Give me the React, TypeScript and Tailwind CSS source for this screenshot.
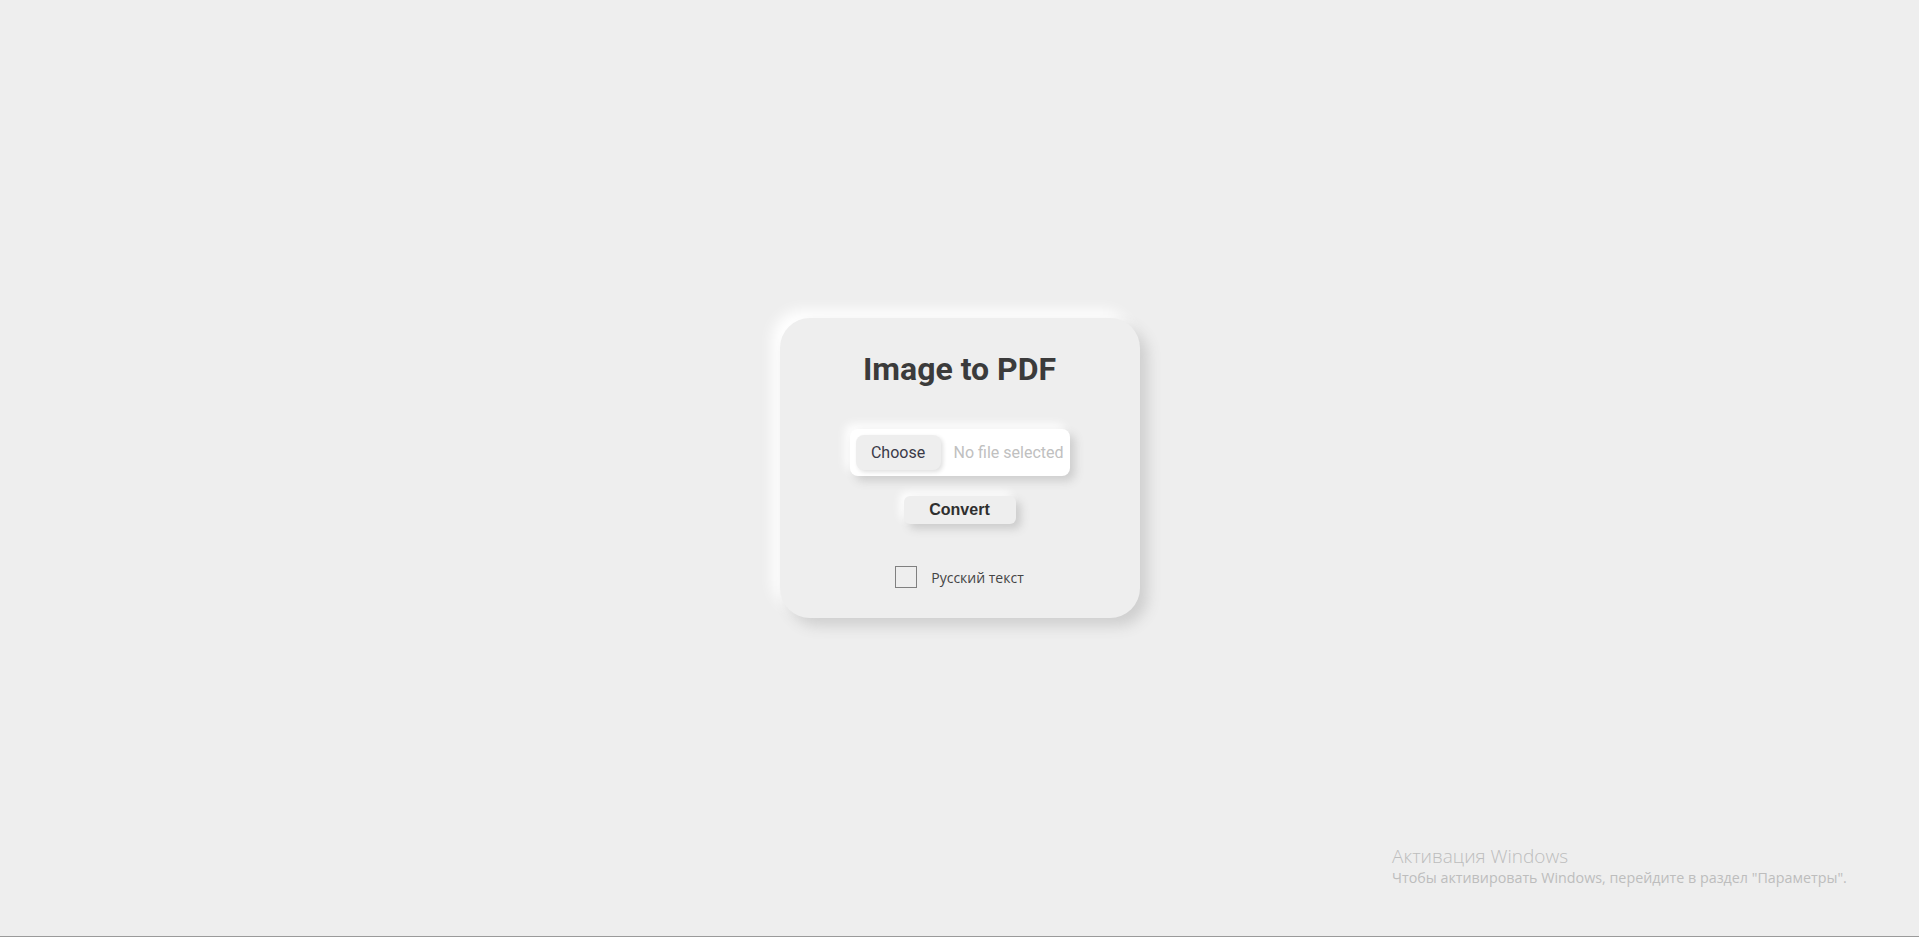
import { useState } from 'react';

export default function App() {
  const [russian, setRussian] = useState(false);

  return (
    <div className="relative h-[937px] w-full overflow-hidden bg-[#eeeeee]" style={{ fontFamily: 'Roboto, sans-serif' }}>
      <div className="flex h-[936px] items-center justify-center">
        <div className="flex h-[300px] w-[360px] flex-col items-center rounded-[30px] bg-[#eeeeee] pt-[32px] shadow-[8px_8px_14px_#cfcfcf,-8px_-8px_14px_#ffffff]">
          <h1 className="text-[32px] leading-[38px] font-bold text-[#3b3b3b]">Image to PDF</h1>

          <div className="mt-[41px] flex h-[47px] w-[220px] items-center rounded-[8px] bg-white px-[6px] shadow-[5px_5px_10px_#cdcdcd,-5px_-5px_10px_#ffffff]">
            <button className="h-[35px] w-[86px] rounded-[8px] bg-[#eeeeee] text-[16px] text-[#3a3a48] shadow-[2px_2px_4px_#e0e0e0]">
              Choose
            </button>
            <span className="ml-[13px] text-[16px] whitespace-nowrap text-[#c0c0c0]">No file selected</span>
          </div>

          <button
            className="mt-[20px] h-[28px] w-[112px] rounded-[6px] bg-[#eeeeee] text-[16px] font-bold text-[#2f2f2f] shadow-[5px_5px_8px_#cccccc,-4px_-4px_8px_#ffffff]"
            style={{ fontFamily: '"Liberation Sans", Arial, sans-serif' }}
          >
            Convert
          </button>

          <label className="mt-[42px] flex items-center" style={{ fontFamily: '"Open Sans", sans-serif' }}>
            <input
              type="checkbox"
              checked={russian}
              onChange={(e) => setRussian(e.target.checked)}
              className="h-[22px] w-[22px] appearance-none border border-[#808080] bg-transparent"
            />
            <span className="ml-[14px] text-[14px] text-[#444]">Русский текст</span>
          </label>
        </div>
      </div>

      <div className="h-px w-full bg-[#9a9a9a]" />

      <div className="absolute top-[844px] left-[1392px] text-[#bdbdbd]" style={{ fontFamily: '"Open Sans", sans-serif' }}>
        <div className="text-[19px] leading-[24px] font-light">Активация Windows</div>
        <div className="text-[14.3px] leading-[20px]">Чтобы активировать Windows, перейдите в раздел "Параметры".</div>
      </div>
    </div>
  );
}
